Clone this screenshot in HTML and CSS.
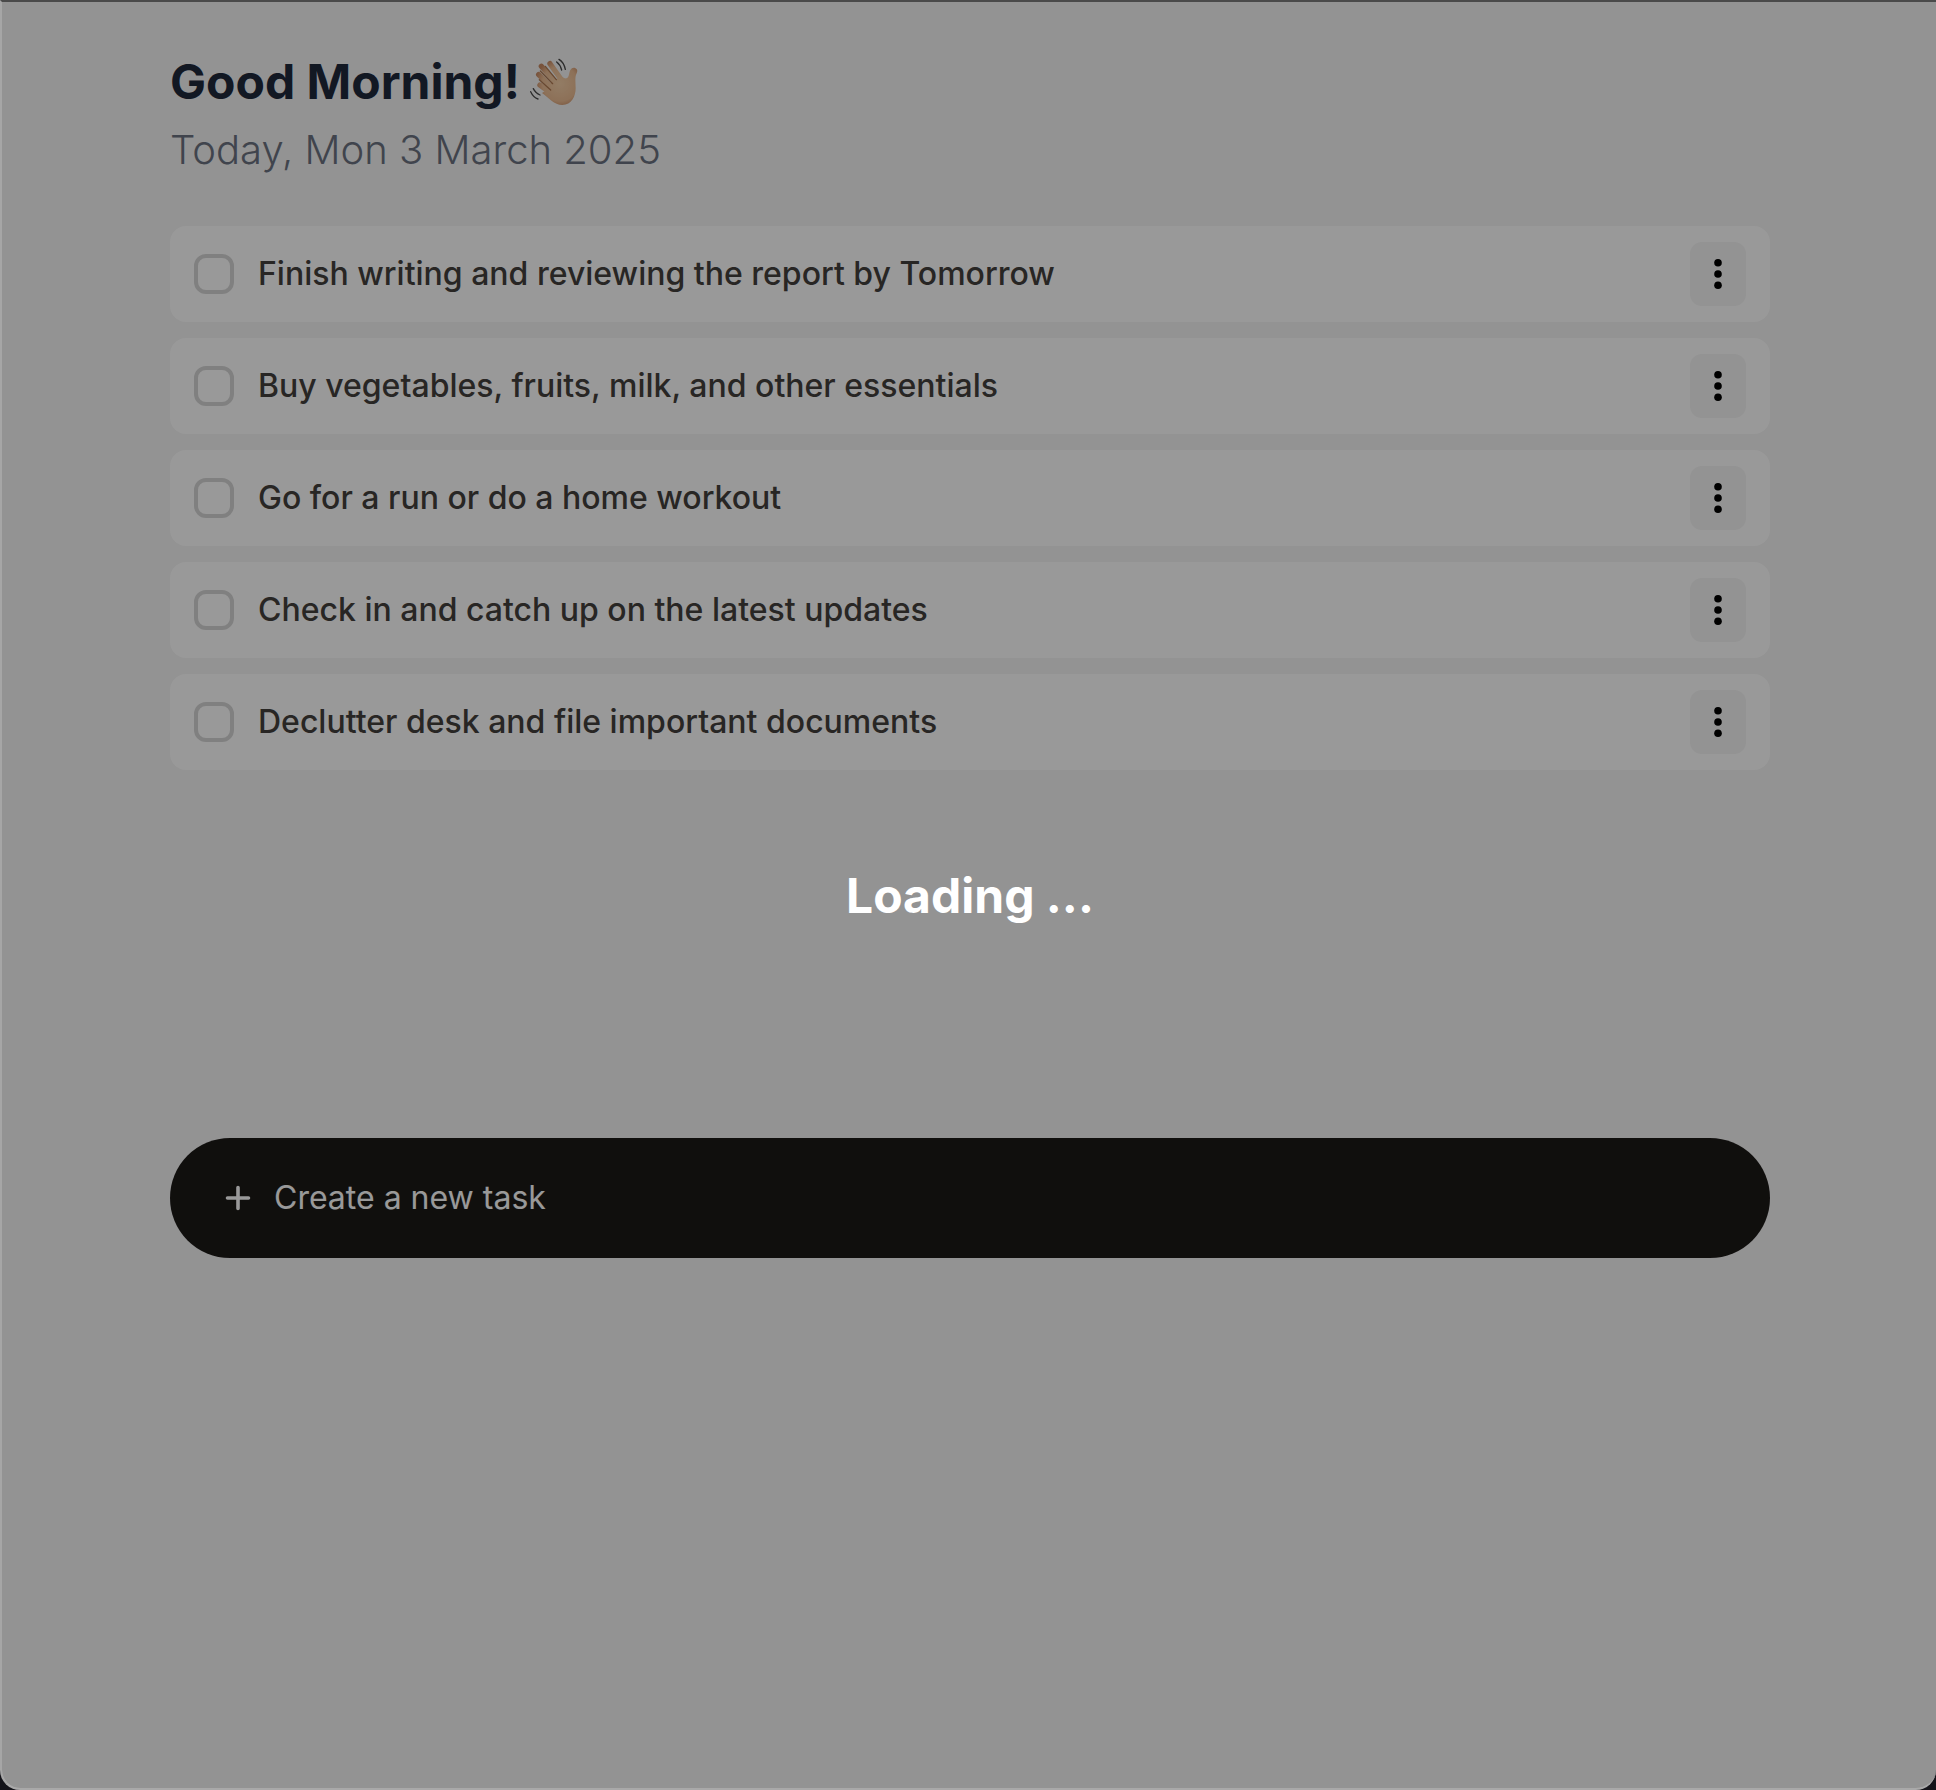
FILE: index.html
```html
<!DOCTYPE html>
<html lang="en">
<head>
<meta charset="utf-8">
<meta name="viewport" content="width=device-width, initial-scale=1">
<title>Tasks</title>
<link rel="stylesheet" href="styles.css">
</head>
<body>
<svg width="0" height="0" class="sprite" aria-hidden="true">
  <symbol id="dots" viewBox="0 0 32 32">
    <circle cx="16" cy="4.800" r="3.800"/><circle cx="16" cy="16" r="3.800"/><circle cx="16" cy="27.200" r="3.800"/>
  </symbol>
</svg>
<div class="window">
  <main class="page">
    <header class="header">
      <h1 class="title">Good Morning!
        <svg class="wave" viewBox="30 30 150 150" role="img" aria-label="Waving hand">
          <defs>
            <radialGradient id="skin" gradientUnits="userSpaceOnUse" cx="120" cy="110" r="75">
              <stop offset="0" stop-color="#f4cfa8"/><stop offset=".7" stop-color="#ebbc93"/><stop offset="1" stop-color="#c98b64"/>
            </radialGradient>
          </defs>
          <g fill="none" stroke="url(#skin)" stroke-width="16" stroke-linecap="round">
            <path d="M90 50 124 98M64 58 108 108M56 83 98 124M60 114 98 142"/>
          </g>
          <path fill="url(#skin)" d="M78 130 92 108 122 88 134 94C143 96 146 90 148 78C150 67 157 61 165 63C173 66 173 73 170 79C164 91 167 104 167 124C167 147 155 174 127 174C103 174 85 152 66 138Z"/>
          <g fill="none" stroke="#b07a52" stroke-width="4" stroke-linecap="round">
            <path d="M76 58 109 98M61 72 98 110M58 98 92 129"/>
          </g>
          <g fill="none" stroke="#4a4a4a" stroke-width="4" stroke-linecap="round">
            <path d="M117 37Q132 46 136 67M110 45Q121 53 125 69M40 125Q47 139 60 144M32 134Q40 151 54 156"/>
          </g>
        </svg>
      </h1>
      <p class="date">Today, Mon 3 March 2025</p>
    </header>
    <ul class="tasks">
      <li class="task">
        <input class="check" type="checkbox" id="t1"><label class="label" for="t1">Finish writing and reviewing the report by Tomorrow</label>
        <button class="more" type="button" aria-label="Task options"><svg class="dots"><use href="#dots"/></svg></button>
      </li>
      <li class="task">
        <input class="check" type="checkbox" id="t2"><label class="label" for="t2">Buy vegetables, fruits, milk, and other essentials</label>
        <button class="more" type="button" aria-label="Task options"><svg class="dots"><use href="#dots"/></svg></button>
      </li>
      <li class="task">
        <input class="check" type="checkbox" id="t3"><label class="label" for="t3">Go for a run or do a home workout</label>
        <button class="more" type="button" aria-label="Task options"><svg class="dots"><use href="#dots"/></svg></button>
      </li>
      <li class="task">
        <input class="check" type="checkbox" id="t4"><label class="label" for="t4">Check in and catch up on the latest updates</label>
        <button class="more" type="button" aria-label="Task options"><svg class="dots"><use href="#dots"/></svg></button>
      </li>
      <li class="task">
        <input class="check" type="checkbox" id="t5"><label class="label" for="t5">Declutter desk and file important documents</label>
        <button class="more" type="button" aria-label="Task options"><svg class="dots"><use href="#dots"/></svg></button>
      </li>
    </ul>
    <form class="create">
      <svg class="plus" viewBox="0 0 32 32" aria-hidden="true"><path d="M16 5.500V26.500M5.500 16H26.500"/></svg>
      <input class="field" type="text" placeholder="Create a new task" aria-label="Create a new task">
    </form>
  </main>
  <div class="overlay" role="status">Loading ...</div>
</div>
</body>
</html>
```
FILE: styles.css
```css
* { box-sizing: border-box; }

body {
  margin: 0;
  background: #14141a;
  font-family: Inter, "Liberation Sans", sans-serif;
}

.sprite { position: absolute; }

.window {
  position: relative;
  min-height: 100vh;
  padding-left: 2px;
  border-top: 2px solid #4a4a4a;
  border-left: 2px solid #a6a6a6;
  border-bottom: 2px solid #a9a9a9;
  border-radius: 0 0 20px 20px;
  background: #f5f5f5;
  overflow: hidden;
}

.page {
  max-width: 1600px;
  margin: 0 auto;
  padding: 52px 0 64px;
}

.header {
  display: flex;
  flex-direction: column;
  gap: 16px;
  margin-bottom: 52px;
}

.title {
  display: flex;
  align-items: center;
  gap: 10px;
  margin: 0;
  color: #1e293b;
  font-size: 48px;
  font-weight: 700;
  line-height: 56px;
}

.wave { width: 50px; height: 50px; }

.date {
  margin: 0;
  color: #6b7280;
  font-size: 40px;
  font-weight: 300;
  line-height: 48px;
}

.tasks {
  display: flex;
  flex-direction: column;
  gap: 16px;
  min-height: 880px;
  margin: 0 0 32px;
  padding: 0;
  list-style: none;
}

.task {
  display: flex;
  align-items: center;
  gap: 24px;
  padding: 16px 24px;
  border-radius: 16px;
  background: #fff;
}

.check {
  appearance: none;
  width: 40px;
  height: 40px;
  margin: 0;
  border: 4px solid #d6d6d6;
  border-radius: 12px;
}

.label {
  flex: 1;
  color: #44403c;
  font-size: 32px;
  font-weight: 500;
  line-height: 48px;
}

.more {
  display: grid;
  place-items: center;
  width: 56px;
  height: 64px;
  padding: 0;
  border: 0;
  border-radius: 12px;
  background: #f5f5f5;
}

.dots { width: 32px; height: 32px; }

.create {
  display: flex;
  align-items: center;
  gap: 20px;
  height: 120px;
  padding: 0 52px;
  border-radius: 60px;
  background: #1c1917;
}

.plus {
  width: 32px;
  height: 32px;
  fill: none;
  stroke: #fff;
  stroke-width: 3.6;
  stroke-linecap: round;
}

.field {
  flex: 1;
  min-width: 0;
  padding: 0;
  border: 0;
  background: none;
  color: #fff;
  font: 400 32px/48px Inter, "Liberation Sans", sans-serif;
}

.field::placeholder { color: #fff; opacity: 1; }

.overlay {
  position: absolute;
  inset: 0;
  display: grid;
  place-items: center;
  padding-left: 2px;
  background: rgba(0, 0, 0, 0.4);
  color: #fff;
  font-size: 48px;
  font-weight: 700;
}
```
